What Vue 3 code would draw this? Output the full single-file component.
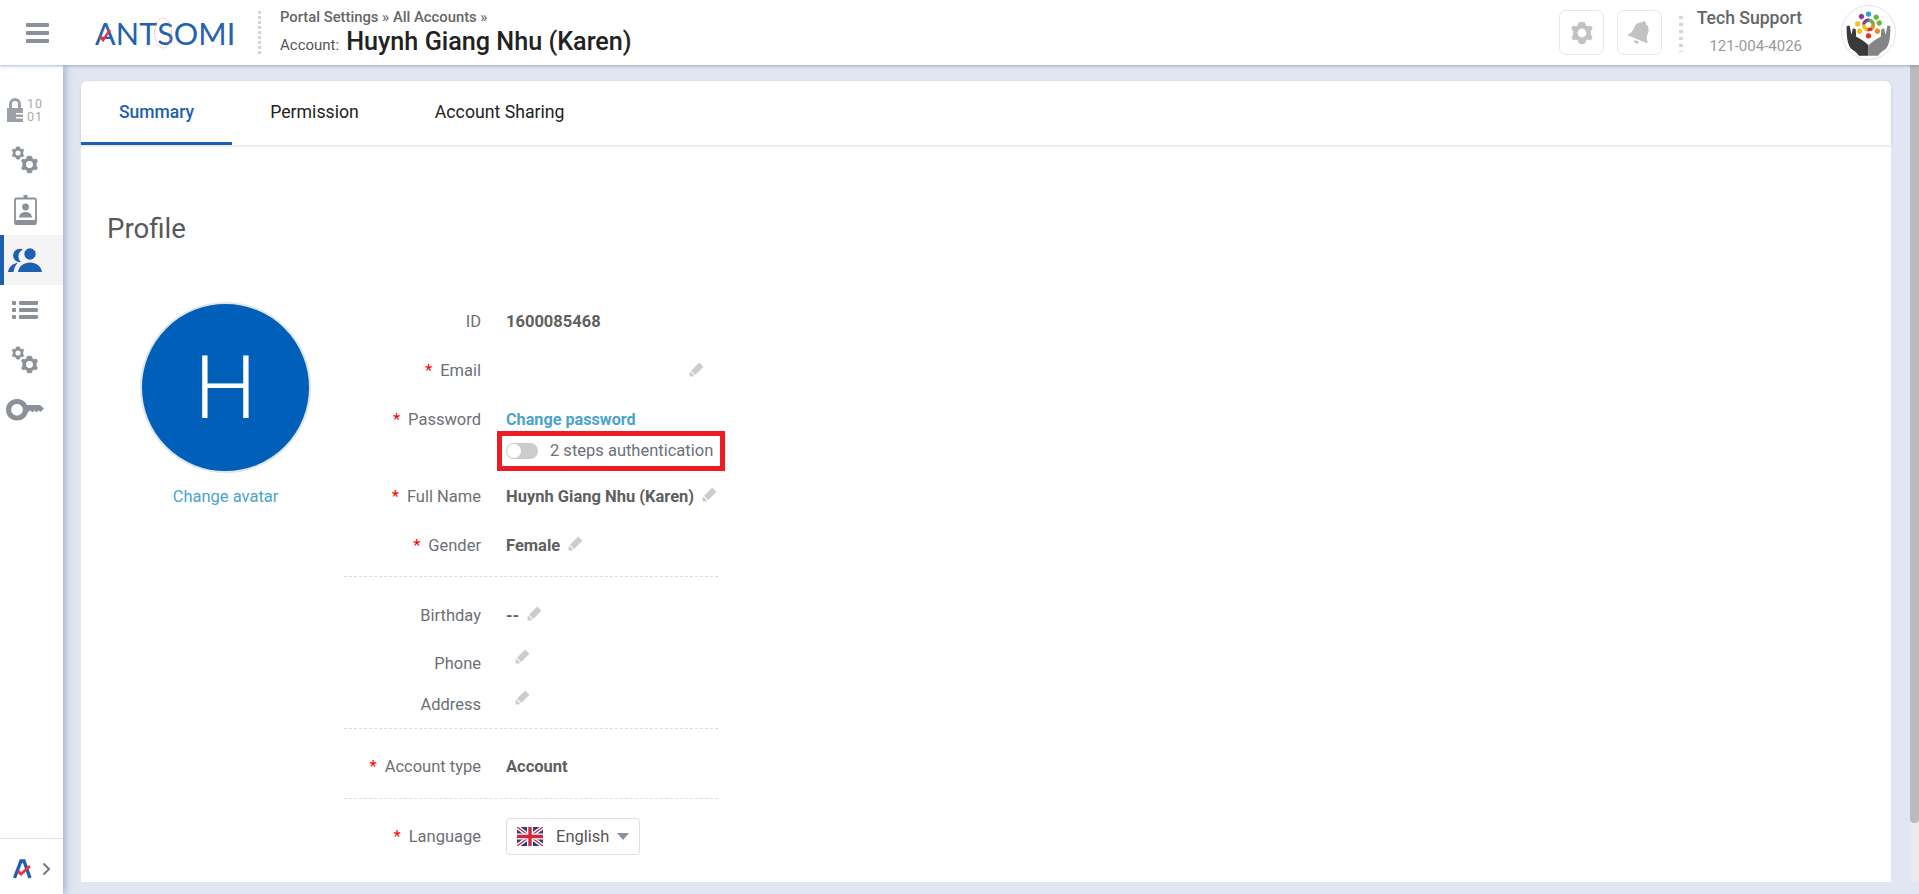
<script setup>
const sideItems = [
  { icon: 'lock' },
  { icon: 'gears' },
  { icon: 'badge' },
  { icon: 'people', active: true },
  { icon: 'list' },
  { icon: 'gears' },
  { icon: 'key' },
];

const tabs = [
  { label: 'Summary', active: true },
  { label: 'Permission' },
  { label: 'Account Sharing' },
];

const peopleDots = [
  { c: '#2f9fd8', a: 0 },
  { c: '#6cb33f', a: 45 },
  { c: '#6cb33f', a: 80 },
  { c: '#f08a24', a: 125 },
  { c: '#e2332b', a: 180 },
  { c: '#f2c21a', a: 235 },
  { c: '#f2c21a', a: 275 },
  { c: '#8e3a9d', a: 320 },
];
</script>

<template>
  <div class="page">
    <svg class="defs" aria-hidden="true">
      <symbol id="gear" viewBox="0 0 24 24">
        <path fill="currentColor" stroke="currentColor" stroke-width="1.200" stroke-linejoin="round" d="M12 1.500l2.600.3.9 3 2.100 1.200 3-.7 1.300 2.300-1.600 2.400v3.900l1.600 2.400-1.300 2.300-3-.7-2.100 1.200-.9 3-2.600.5-2.600-.5-.9-3-2.100-1.200-3 .7-1.300-2.300 1.600-2.400v-3.900L1.900 7.600l1.300-2.300 3 .7 2.100-1.200.9-3z" />
        <circle cx="12" cy="12" r="4.400" fill="#fff" />
      </symbol>
      <symbol id="pencil" viewBox="0 0 14 14">
        <path fill="currentColor" d="M9.600.5l3.900 3.900-7.700 7.700-3.900-3.900zM1.400 9.200l3.400 3.400-1 .9H.5v-3.300z" />
      </symbol>
    </svg>

    <header class="topbar">
      <div class="burger"><span></span><span></span><span></span></div>
      <div class="logo">
        <span class="logo-text">ANTSOMI</span>
        <svg class="logo-check" viewBox="0 0 20 16"><path d="M2 10l4 4 8-12" fill="none" stroke="#e8343f" stroke-width="3" /></svg>
        <svg class="logo-ring" viewBox="0 0 20 32"><ellipse cx="10" cy="16" rx="8.500" ry="15" fill="none" stroke="#e98a9b" stroke-width="0.800" stroke-dasharray="1.500 1.500" /></svg>
      </div>
      <div class="head-sep"></div>
      <div class="crumbs">
        <div class="crumb-line">Portal Settings » All Accounts »</div>
        <div class="account-line"><span class="account-label">Account:</span><span class="account-name">Huynh Giang Nhu (Karen)</span></div>
      </div>

      <div class="top-right">
        <button class="square-btn">
          <svg class="btn-gear"><use href="#gear" /></svg>
        </button>
        <button class="square-btn">
          <svg class="btn-bell" viewBox="0 0 28 28">
            <g transform="rotate(22 14 14)" fill="#c2c2c2">
              <path d="M14 1.500c1.100 0 2 .8 2 1.900 3.600.9 5.400 4 5.400 7.800 0 4.400 1.100 6.400 3.100 8.300v1.300h-21v-1.300c2-1.900 3.100-3.900 3.100-8.300 0-3.800 1.800-6.900 5.400-7.800 0-1.100.9-1.900 2-1.900z" />
              <path d="M11.500 22.500h5c0 1.400-1.100 2.500-2.500 2.500s-2.500-1.100-2.500-2.500z" />
            </g>
          </svg>
        </button>
        <div class="user-sep"></div>
        <div class="support">
          <div class="support-name">Tech Support</div>
          <div class="support-phone">121-004-4026</div>
        </div>
        <div class="user-avatar">
          <svg viewBox="0 0 56 56">
            <g v-for="(d, i) in peopleDots" :key="i" :transform="`rotate(${d.a} 28 20)`">
              <circle cx="28" cy="8.500" r="2.800" :fill="d.c" />
              <path d="M23.500 15.500c1-3 8-3 9 0l-2 1.500h-5z" :fill="d.c" />
            </g>
            <path fill="#3a3a3a" d="M5 21l3-.5 2 10 1.500-7 3 1 .5 8c4 2 9 5 13 9v11H18c-2-3-5-5-8-7-4-4-5.500-13-5-25z" />
            <path fill="#858585" d="M51 21l-3-.5-2 10-1.500-7-3 1-.5 8c-4 2-9 5-13 9v11h10c2-3 5-5 8-7 4-4 5.500-13 5-25z" />
          </svg>
        </div>
      </div>
    </header>

    <div class="body-row">
      <aside class="sidebar">
        <nav class="side-list">
          <div v-for="(item, i) in sideItems" :key="i" class="side-item" :class="{ active: item.active }">
            <svg v-if="item.icon === 'lock'" class="side-icon lock-icon" width="36" height="24" viewBox="0 0 36 24">
              <path fill="#9aa0a6" d="M0 10h16v14H0z" />
              <path fill="none" stroke="#9aa0a6" stroke-width="3" d="M3.500 11V6a4.500 4.500 0 0 1 9 0v5" />
              <path fill="#fff" d="M9 15h7v1.500H9zM9 19h7v1.500H9z" />
              <text x="20" y="10" class="bits">10</text>
              <text x="20" y="23" class="bits">01</text>
            </svg>
            <svg v-else-if="item.icon === 'gears'" class="side-icon" width="28" height="28" viewBox="0 0 28 28">
              <svg x="0" y="0" width="14" height="14" color="#8b9198"><use href="#gear" /></svg>
              <svg x="9" y="9" width="19" height="19" color="#8b9198"><use href="#gear" /></svg>
            </svg>
            <svg v-else-if="item.icon === 'badge'" class="side-icon" width="23" height="30" viewBox="0 0 23 30">
              <path fill="#8b9198" d="M9.500 0h4v4h-4z" />
              <rect x="1" y="3.500" width="21" height="25" rx="1.500" fill="none" stroke="#8b9198" stroke-width="1.800" />
              <path fill="#8b9198" d="M.5 25h22v3.500a1.500 1.500 0 0 1-1.500 1.500H2a1.500 1.500 0 0 1-1.500-1.500z" />
              <circle cx="11.500" cy="12" r="3.400" fill="#8b9198" />
              <path fill="#8b9198" d="M5 22.500c.5-4 3-5.500 6.500-5.500s6 1.500 6.500 5.500z" />
            </svg>
            <svg v-else-if="item.icon === 'people'" class="side-icon" width="34" height="24" viewBox="0 0 34 24">
              <path fill="#1f5fb0" d="M15 1.500A6.700 6.700 0 1 0 13 14 7.500 7.500 0 0 1 15 1.500zM0 24c1-5 4-8 10-9.500-2.500 2.500-4 5.500-4.500 9.500zM22 .3a5.700 5.700 0 1 1 0 11.400 5.700 5.700 0 0 1 0-11.400zM10 24c1-6 6-9.500 12-9.500s11 3.500 12 9.500z" />
            </svg>
            <svg v-else-if="item.icon === 'list'" class="side-icon" width="26" height="20" viewBox="0 0 26 20">
              <g fill="#8b9198">
                <rect x="0" y="1" width="4" height="4" rx="1" />
                <rect x="0" y="8" width="4" height="4" rx="1" />
                <rect x="0" y="15" width="4" height="4" rx="1" />
                <rect x="7" y="1" width="19" height="4" rx="1" />
                <rect x="7" y="8" width="19" height="4" rx="1" />
                <rect x="7" y="15" width="19" height="4" rx="1" />
              </g>
            </svg>
            <svg v-else class="side-icon" width="38" height="22" viewBox="0 0 38 22">
              <path fill="#8b9198" fill-rule="evenodd" d="M11 0c4.600 0 8.500 2.500 10 6h13l4 3.500-3.500 3.500-2-1.500-2 2-2-2-2 2-2-2-2.500 1.500c-1.500 5-5.500 8.500-11 8.500C4.900 21.500 0 16.900 0 10.700S4.900 0 11 0zm0 5c-3.300 0-5.800 2.500-5.800 5.700s2.500 5.800 5.800 5.800 5.800-2.600 5.800-5.800S14.300 5 11 5z" />
            </svg>
          </div>
        </nav>
        <div class="side-foot">
          <svg class="foot-logo" viewBox="0 0 20 20">
            <path d="M1.500 19L8 2h3l6 17" fill="none" stroke="#1f5fb0" stroke-width="3.400" />
            <path d="M5 12l3 3 9-8" fill="none" stroke="#e8343f" stroke-width="2.800" />
          </svg>
          <svg class="foot-chevron" viewBox="0 0 9 14"><path d="M1.500 1.500L7 7l-5.500 5.500" fill="none" stroke="#777" stroke-width="2" /></svg>
        </div>
      </aside>

      <main class="content">
        <div class="tabs">
          <div v-for="t in tabs" :key="t.label" class="tab" :class="{ active: t.active }">{{ t.label }}</div>
        </div>

        <section class="card">
          <h1 class="title">Profile</h1>
          <div class="profile">
            <div class="avatar-col">
              <div class="avatar">H</div>
              <a class="link change-avatar">Change avatar</a>
            </div>

            <div class="form">
              <div class="group first">
                <div class="row">
                  <div class="lbl">ID</div>
                  <div class="val"><b>1600085468</b></div>
                </div>
                <div class="row">
                  <div class="lbl"><i>*</i>Email</div>
                  <div class="val"><svg class="pencil email-pencil"><use href="#pencil" /></svg></div>
                </div>
                <div class="row pw-row">
                  <div class="lbl"><i>*</i>Password</div>
                  <div class="val-stack">
                    <div class="val"><a class="link strong">Change password</a></div>
                    <div class="two-step">
                      <span class="toggle"><span class="knob"></span></span>
                      <span>2 steps authentication</span>
                    </div>
                  </div>
                </div>
                <div class="row">
                  <div class="lbl"><i>*</i>Full Name</div>
                  <div class="val"><b>Huynh Giang Nhu (Karen)</b><svg class="pencil"><use href="#pencil" /></svg></div>
                </div>
                <div class="row">
                  <div class="lbl"><i>*</i>Gender</div>
                  <div class="val"><b>Female</b><svg class="pencil"><use href="#pencil" /></svg></div>
                </div>
              </div>

              <div class="group second">
                <div class="row">
                  <div class="lbl">Birthday</div>
                  <div class="val"><b>--</b><svg class="pencil"><use href="#pencil" /></svg></div>
                </div>
                <div class="row phone-row">
                  <div class="lbl">Phone</div>
                  <div class="val"><svg class="pencil high"><use href="#pencil" /></svg></div>
                </div>
                <div class="row">
                  <div class="lbl">Address</div>
                  <div class="val"><svg class="pencil high"><use href="#pencil" /></svg></div>
                </div>
              </div>

              <div class="group third">
                <div class="row">
                  <div class="lbl"><i>*</i>Account type</div>
                  <div class="val"><b>Account</b></div>
                </div>
              </div>

              <div class="group fourth">
                <div class="row lang-row">
                  <div class="lbl"><i>*</i>Language</div>
                  <div class="val">
                    <div class="lang">
                      <svg class="flag" viewBox="0 0 26 19">
                        <rect width="26" height="19" rx="1.500" fill="#27407f" />
                        <path d="M0 0l26 19M26 0L0 19" stroke="#fff" stroke-width="4" />
                        <path d="M0 0l26 19M26 0L0 19" stroke="#d0283c" stroke-width="1.400" />
                        <path d="M13 0v19M0 9.500h26" stroke="#fff" stroke-width="6" />
                        <path d="M13 0v19M0 9.500h26" stroke="#d0283c" stroke-width="3.400" />
                      </svg>
                      <span class="lang-name">English</span>
                      <span class="caret"></span>
                    </div>
                  </div>
                </div>
              </div>
            </div>
          </div>
        </section>
      </main>

      <div class="scrollbar"><div class="thumb"></div></div>
    </div>
  </div>
</template>

<style>
html, body {
  margin: 0;
  overflow: hidden;
}
</style>

<style scoped>
.page {
  height: 100vh;
  display: flex;
  flex-direction: column;
  background: #e2e6f3;
  font-family: Roboto, sans-serif;
  font-size: 16.5px;
  color: #666;
  overflow: hidden;
}

.defs {
  position: absolute;
  width: 0;
  height: 0;
}

.topbar {
  position: relative;
  z-index: 3;
  flex: none;
  height: 65px;
  display: flex;
  align-items: center;
  background: #fff;
  box-shadow: 0 1px 3px rgba(90, 120, 150, 0.55);
}

.burger {
  width: 23px;
  margin-left: 26px;
  display: flex;
  flex-direction: column;
  gap: 4px;
}

.burger span {
  height: 4px;
  border-radius: 1px;
  background: #8a919a;
}

.logo {
  position: relative;
  margin-left: 46px;
  width: 138px;
  height: 32px;
  line-height: 32px;
}

.logo-text {
  font-family: Lato, sans-serif;
  font-size: 30.500px;
  letter-spacing: 0.1px;
  color: #2262b0;
}

.logo-check {
  position: absolute;
  left: 3px;
  top: 11px;
  width: 17px;
  height: 14px;
}

.logo-ring {
  position: absolute;
  left: 58px;
  top: 0;
  width: 20px;
  height: 32px;
}

.head-sep {
  width: 3px;
  height: 46px;
  margin-left: 25px;
  background-image: radial-gradient(circle, #d3d3d3 1.4px, transparent 1.6px);
  background-size: 3px 5px;
}

.crumbs {
  margin-left: 19px;
}

.crumb-line {
  font-size: 14.8px;
  font-weight: 500;
  line-height: 18px;
  color: #666;
}

.account-line {
  display: flex;
  align-items: baseline;
  height: 30px;
  margin-top: 1px;
}

.account-label {
  font-size: 15px;
  color: #555;
}

.account-name {
  margin-left: 7px;
  font-size: 25.2px;
  font-weight: 500;
  color: #222;
}

.top-right {
  margin-left: auto;
  display: flex;
  align-items: center;
}

.square-btn {
  width: 45px;
  height: 45px;
  margin-right: 13px;
  padding: 0;
  border: 1px solid #e3e7ee;
  border-radius: 7px;
  background: #fff;
  display: flex;
  align-items: center;
  justify-content: center;
}

.btn-gear {
  width: 24px;
  height: 24px;
  color: #c2c2c2;
}

.btn-bell {
  width: 28px;
  height: 28px;
}

.user-sep {
  width: 4px;
  height: 38px;
  margin-left: 4px;
  background-image: radial-gradient(circle, #d6d6d6 1.9px, transparent 2.1px);
  background-size: 4px 7px;
}

.support {
  width: 106px;
  margin-left: 13px;
  text-align: right;
}

.support-name {
  font-size: 17.6px;
  font-weight: 500;
  line-height: 24px;
  margin-top: -4px;
  color: #666;
}

.support-phone {
  margin-top: 6px;
  font-size: 15px;
  line-height: 20px;
  color: #999;
}

.user-avatar {
  width: 55px;
  height: 55px;
  margin: 0 23px 0 39px;
  border: 1px solid #dfe5ee;
  border-radius: 50%;
  box-sizing: border-box;
  overflow: hidden;
}

.user-avatar svg {
  width: 100%;
  height: 100%;
  display: block;
}

.body-row {
  flex: 1;
  min-height: 0;
  display: flex;
}

.sidebar {
  position: relative;
  z-index: 2;
  flex: none;
  width: 63px;
  display: flex;
  flex-direction: column;
  background: #fff;
  box-shadow: 2px 0 8px rgba(90, 120, 170, 0.55);
}

.side-list {
  flex: 1;
  padding-top: 20px;
}

.side-item {
  height: 50px;
  display: flex;
  align-items: center;
  justify-content: center;
  border-left: 4px solid transparent;
  box-sizing: border-box;
  padding-right: 17px;
}

.side-item.active {
  border-left-color: #1f5fb0;
  background: #f4f4f4;
}

.side-icon {
  flex: none;
}

.lock-icon {
  overflow: visible;
}

.bits {
  font-family: Roboto, sans-serif;
  font-size: 12.5px;
  letter-spacing: 1px;
  fill: #a5a9ae;
}

.side-foot {
  flex: none;
  height: 56px;
  border-top: 1px solid #e4e4e4;
  display: flex;
  align-items: center;
  padding: 4px 0 0 13px;
  box-sizing: border-box;
}

.foot-logo {
  width: 20px;
  height: 20px;
}

.foot-chevron {
  width: 9px;
  height: 14px;
  margin-left: 9px;
}

.content {
  flex: 1;
  min-width: 0;
  padding: 16px 19px 12px 18px;
  display: flex;
  flex-direction: column;
}

.tabs {
  position: relative;
  flex: none;
  height: 64px;
  display: flex;
  background: #fff;
  border-radius: 6px 6px 0 0;
  box-shadow: 0 1px 3px rgba(0, 0, 0, 0.14);
}

.tab {
  padding: 0 38px;
  line-height: 62px;
  font-size: 17.7px;
  color: #222;
}

.tab.active {
  height: 61px;
  border-bottom: 3px solid #1f5fb0;
  color: #1f5fb0;
  font-weight: 500;
  font-size: 17.5px;
}

.card {
  flex: 1;
  min-height: 0;
  background: #fff;
  overflow: hidden;
}

.title {
  margin: 69px 0 0 26px;
  font-size: 27.6px;
  font-weight: 400;
  line-height: 30px;
  color: #595959;
}

.profile {
  display: flex;
}

.avatar-col {
  width: 263px;
  display: flex;
  flex-direction: column;
  align-items: center;
  padding: 58px 4px 0 30px;
  box-sizing: border-box;
}

.avatar {
  width: 167px;
  height: 167px;
  border: 2px solid #dfe5ee;
  border-radius: 50%;
  background: #0060b9;
  color: #fff;
  font-size: 88px;
  font-weight: 300;
  line-height: 167px;
  text-align: center;
}

.link {
  color: #4aa3cc;
}

.link.strong {
  font-size: 16.2px;
  font-weight: 700;
}

.change-avatar {
  margin-top: 14px;
}

.form {
  width: 374px;
}

.group {
  display: flex;
  flex-direction: column;
  gap: 25px;
  border-bottom: 1px dashed #ddd;
}

.group.first {
  padding: 66px 0 18px;
}

.group.second {
  padding: 27px 0 11px;
  gap: 17px;
}

.group.third {
  padding: 26px 0 19px;
}

.group.fourth {
  padding: 19px 0 0;
  border-bottom: none;
}

.row {
  display: flex;
  align-items: flex-start;
  min-height: 24px;
  line-height: 24px;
}

.lang-row {
  align-items: center;
}

.pw-row {
  margin-bottom: -11px;
}

.phone-row {
  margin-top: 7px;
}

.lbl {
  flex: none;
  width: 137px;
  margin-right: 25px;
  text-align: right;
  color: #6c7077;
}

.lbl i {
  margin-right: 8px;
  font-style: normal;
  color: #f00;
}

.val {
  display: flex;
  align-items: center;
  min-height: 24px;
}

.val b {
  color: #5f5f5f;
  font-weight: 700;
}

.val-stack {
  display: flex;
  flex-direction: column;
}

.pencil {
  flex: none;
  width: 15px;
  height: 15px;
  margin: -6px 0 0 8px;
  color: #ccc;
}

.pencil.high {
  margin: -16px 0 0 9px;
}

.pencil.email-pencil {
  margin-left: 183px;
  margin-top: -4px;
}

.two-step {
  display: flex;
  align-items: center;
  width: 228px;
  height: 40px;
  margin: -1px 0 0 -9px;
  padding-left: 4px;
  border: 5px solid #ed1c24;
  box-sizing: border-box;
  white-space: nowrap;
  color: #6c7077;
}

.toggle {
  flex: none;
  width: 32px;
  height: 16px;
  margin-right: 12px;
  border-radius: 8px;
  background: #ccc;
  display: flex;
  align-items: center;
  padding-left: 1px;
  box-sizing: border-box;
}

.knob {
  width: 14px;
  height: 14px;
  border-radius: 50%;
  background: #fff;
}

.lang {
  width: 134px;
  height: 37px;
  border: 1px solid #ddd;
  border-radius: 4px;
  display: flex;
  align-items: center;
  box-sizing: border-box;
  padding-left: 10px;
  color: #555;
}

.flag {
  flex: none;
  width: 26px;
  height: 19px;
}

.lang-name {
  margin-left: 13px;
}

.caret {
  margin-left: 8px;
  border-left: 6px solid transparent;
  border-right: 6px solid transparent;
  border-top: 7px solid #8a919a;
}

.scrollbar {
  flex: none;
  width: 9px;
  height: 817px;
  background: #ebebeb;
}

.thumb {
  height: 758px;
  background: #bbb;
  border-radius: 0 0 4px 4px;
}
</style>
